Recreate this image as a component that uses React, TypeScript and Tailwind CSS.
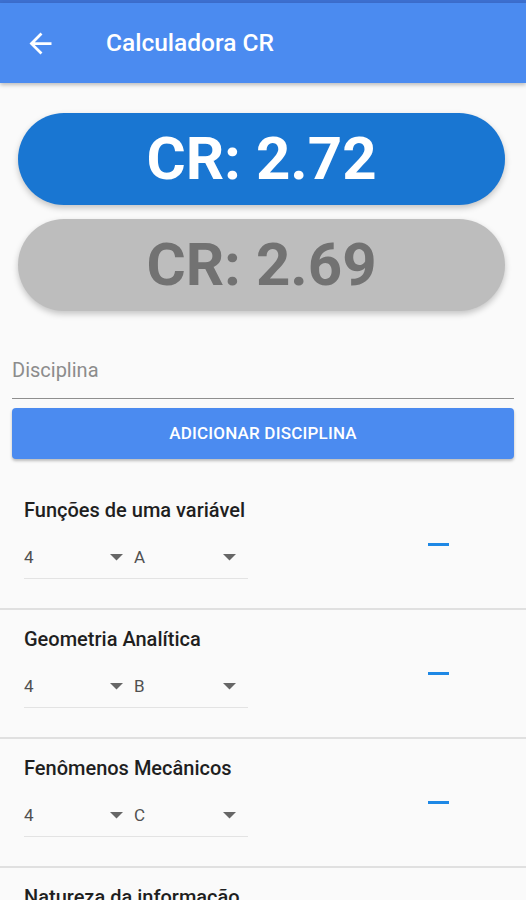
import React from "react";

const rows = [
  { name: "Funções de uma variável", cred: "4", grade: "A" },
  { name: "Geometria Analítica", cred: "4", grade: "B" },
  { name: "Fenômenos Mecânicos", cred: "4", grade: "C" },
  { name: "Natureza da informação", cred: "4", grade: "A" },
];

function Caret() {
  return (
    <svg width="13" height="7" viewBox="0 0 13 7" className="shrink-0">
      <polygon points="0,0 13,0 6.5,6.5" fill="#666666" />
    </svg>
  );
}

export default function App() {
  return (
    <div className="h-[900px] overflow-hidden bg-[#fafafa] font-['Roboto',sans-serif]">
      <div className="h-[3px] bg-[#3d70d0]" />
      <header className="relative z-10 flex h-[80px] items-center bg-[#4b8bf0] shadow-[0_2px_4px_rgba(0,0,0,0.25)]">
        <svg className="ml-[24px] h-[33px] w-[33px]" viewBox="0 0 24 24" fill="#ffffff">
          <path d="M20 11H7.83l5.59-5.59L12 4l-8 8 8 8 1.41-1.41L7.83 13H20v-2z" />
        </svg>
        <span className="ml-[49px] text-[24.5px] font-medium leading-[28px] text-white">Calculadora CR</span>
      </header>

      <div className="flex flex-col gap-[14px] pl-[18px] pr-[21px] pt-[30px]">
        <div className="flex h-[92px] items-center justify-center rounded-full bg-[#1976d2] shadow-[0_3px_6px_rgba(0,0,0,0.22)]">
          <span className="text-[60px] font-bold leading-none text-white">CR: 2.72</span>
        </div>
        <div className="flex h-[92px] items-center justify-center rounded-full bg-[#bdbdbd] shadow-[0_3px_6px_rgba(0,0,0,0.22)]">
          <span className="text-[60px] font-bold leading-none text-[#727272]">CR: 2.69</span>
        </div>
      </div>

      <div className="mx-[12px] mt-[47px] border-b border-[#8e8e8e] pb-[16px] text-[20px] leading-[24px] text-[#8c8c8c]">
        Disciplina
      </div>

      <div className="mx-[12px] mt-[9px] flex h-[51px] items-center justify-center rounded-[4px] bg-[#4b8bf0] shadow-[0_2px_3px_rgba(0,0,0,0.25)]">
        <span className="text-[17px] font-medium tracking-[0.2px] text-white">ADICIONAR DISCIPLINA</span>
      </div>

      <div className="mt-[22px] flex flex-col">
        {rows.map((r, i) => (
          <div key={i} className="flex h-[129px] shrink-0 border-b-2 border-[#e0e0e0]">
            <div className="w-[248px] shrink-0 self-start pl-[24px] pt-[17px]">
              <div className="whitespace-nowrap text-[20px] font-medium leading-[24px] text-[#1f1f1f]">{r.name}</div>
              <div className="mt-[23px] flex border-b border-[#e3e3e3] pb-[9px] text-[17px] leading-[24px] text-[#505050]">
                <div className="flex w-[109px] items-center justify-between pr-[10px]">
                  <span>{r.cred}</span>
                  <Caret />
                </div>
                <div className="flex w-[115px] items-center justify-between pl-[1px] pr-[12px]">
                  <span>{r.grade}</span>
                  <Caret />
                </div>
              </div>
            </div>
            <div className="ml-[180px] h-[2.5px] w-[21px] self-center bg-[#1e88e5]" />
          </div>
        ))}
      </div>
    </div>
  );
}
